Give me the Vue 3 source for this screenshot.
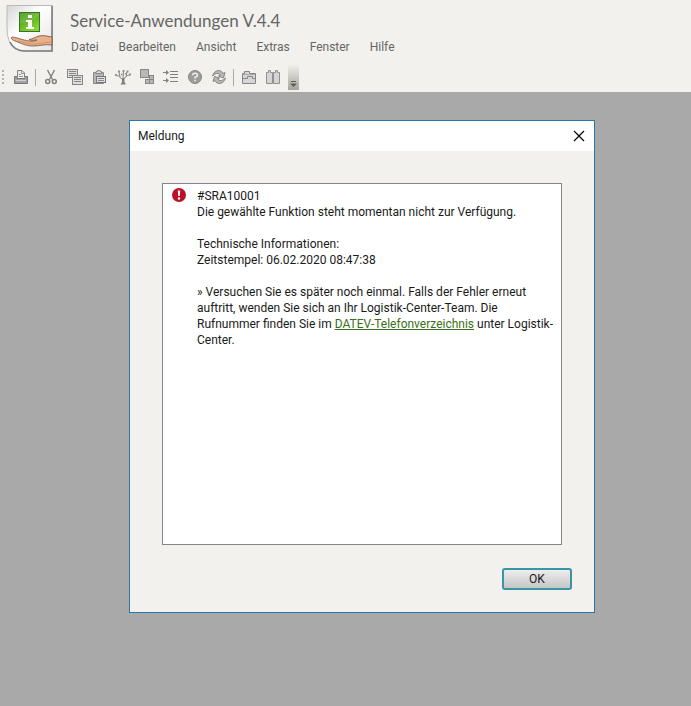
<script setup>
const menus = ['Datei', 'Bearbeiten', 'Ansicht', 'Extras', 'Fenster', 'Hilfe']
</script>

<template>
  <div class="app">
    <header class="header">
      <div class="brand">
        <svg class="logo" viewBox="0 0 48 48" aria-hidden="true">
          <defs>
            <linearGradient id="tile" x1="0" y1="0" x2="1" y2="1">
              <stop offset="0" stop-color="#d4d4d4" />
              <stop offset="0.4" stop-color="#ffffff" />
              <stop offset="1" stop-color="#e4e4e4" />
            </linearGradient>
            <linearGradient id="green" x1="0" y1="0" x2="0.6" y2="1">
              <stop offset="0" stop-color="#3d9412" />
              <stop offset="1" stop-color="#86d436" />
            </linearGradient>
          </defs>
          <path d="M1 .5H46.500V46H19Q6 46 2.500 34Q1 29 1 23Z" fill="url(#tile)" stroke="#b9b9b8" />
          <path d="M46 1V46H19Q8 46 4 37" fill="none" stroke="#7d7d7d" stroke-width="1.600" />
          <rect x="13.500" y="7.500" width="20" height="19" fill="url(#green)" stroke="#36741f" />
          <path d="M14 18Q25 18 33 11V8H14Z" fill="#fff" opacity=".12" />
          <path d="M22 10h4v3h-4zM20 15h6v7h2v2h-8v-2h2v-5h-2z" fill="#fff" />
          <path d="M46 32C40 31 37 30 33 31C29 32 27 34 23 34.500C25 36 29 35 31 35C28 37 22 36 18 35C14 34 9 32 6 32C4 33 6 35 9 36C15 38 19 41 27 41C34 41 38 39 46 40Z" fill="#e8b18b" stroke="#77503c" stroke-width=".8" />
          <path d="M12 36C18 38 23 39 29 39L45 37" fill="none" stroke="#cf946e" stroke-width="1.200" />
        </svg>
        <div class="heading">
          <h1>Service-Anwendungen V.4.4</h1>
          <nav class="menu">
            <a v-for="m in menus" :key="m" href="#" @click.prevent>{{ m }}</a>
          </nav>
        </div>
      </div>

      <div class="toolbar" role="toolbar" aria-label="Symbolleiste">
        <span class="grip"></span>
        <button type="button" aria-label="Drucken">
          <svg viewBox="0 0 16 16">
            <path d="M4.500 8V1.500H9L11.500 4V8" fill="#e9e9e8" stroke="#858585" />
            <path d="M8.500 2V4.500H11M6 5.500h2M6 7.500h4" fill="none" stroke="#999" />
            <path d="M1.500 7.500H4V9.500H12V7.500H14.500V14.500H1.500Z" fill="#a2a2a2" stroke="#787878" />
            <path d="M3 11.500H13" stroke="#d0d0d0" />
          </svg>
        </button>
        <span class="sep"></span>
        <button type="button" aria-label="Ausschneiden">
          <svg viewBox="0 0 16 16" fill="none" stroke="#808080">
            <path d="M4.500 1L9.500 10.500M11.500 1L6.500 10.500" stroke-width="1.400" />
            <circle cx="4.700" cy="12.500" r="2" stroke-width="1.500" />
            <circle cx="11.300" cy="12.500" r="2" stroke-width="1.500" />
          </svg>
        </button>
        <button type="button" aria-label="Kopieren">
          <svg viewBox="0 0 16 16" fill="#dedede" stroke="#858585">
            <rect x=".5" y=".5" width="10" height="8" />
            <path d="M2 2.500h7M2 4.500h7M2 6.500h5" />
            <rect x="5.500" y="6.500" width="10" height="9" />
            <path d="M7 8.500h7M7 10.500h7M7 12.500h7" />
          </svg>
        </button>
        <button type="button" aria-label="Einfügen">
          <svg viewBox="0 0 16 16">
            <path d="M2.500 3.500H12.500V14.500H2.500Z" fill="#b5b5b5" stroke="#888" />
            <path d="M5 4.500V2.500H6.500V1.500H9V2.500H10.500V4.500Z" fill="#ddd" stroke="#888" />
            <rect x="5.500" y="7.500" width="9" height="6" fill="#dedede" stroke="#777" />
            <path d="M7 9.500h6M7 11.500h6" stroke="#888" />
          </svg>
        </button>
        <button type="button" aria-label="Baum">
          <svg viewBox="0 0 16 16">
            <path d="M8 11L3.500 7L1 6.500M5 8L4 3M8 10L8.500 3M8.500 10L12.500 6.500L14.500 6M11 7.500L12 3" fill="none" stroke="#858585" />
            <path d="M7 9H9.500V13L11 15.500H5.500L7 13Z" fill="#808080" />
            <path d="M3 1.500h2v2H3zM7.500 1h2v2h-2zM11.500 1.500h2v2h-2zM14 4.500h2v2h-2zM0 5h2v2H0zM6 4.500h1.500v2H6zM10 4h1.500v1.500H10z" fill="#929292" />
          </svg>
        </button>
        <button type="button" aria-label="Module">
          <svg viewBox="0 0 16 16" fill="#b8b8b8" stroke="#888">
            <rect x="1.500" y=".5" width="8" height="8" />
            <rect x="10.500" y="6.500" width="4" height="4" />
            <rect x="6.500" y="10.500" width="4" height="4" />
            <rect x="10.500" y="10.500" width="4" height="4" />
          </svg>
        </button>
        <button type="button" aria-label="Einzug">
          <svg viewBox="0 0 16 16" fill="none" stroke="#808080">
            <path d="M0 3.500H5M0 11.500H5M7 2.500h8M7 5.500h8M7 8.500h8M7 12.500h8" />
            <path d="M3 1L6 3.500L3 6ZM3 9L6 11.500L3 14Z" fill="#808080" stroke="none" />
          </svg>
        </button>
        <button type="button" aria-label="Hilfe">
          <svg viewBox="0 0 16 16">
            <circle cx="8" cy="8" r="6.500" fill="#9c9c9c" stroke="#858585" />
            <path d="M5.700 6.300Q5.700 4.300 8 4.300Q10.400 4.300 10.400 6.200Q10.400 7.500 8 8.300V9.500M8 10.800V12.300" fill="none" stroke="#eee" stroke-width="1.600" />
          </svg>
        </button>
        <button type="button" aria-label="Aktualisieren">
          <svg viewBox="0 0 16 16" fill="#b8b8b8" stroke="#858585">
            <path d="M1.500 7Q3 1.500 8.500 1.500Q11 2 12 4.500L14 3.500L12.500 9L7.500 7L9.500 6Q8 4 5.500 4.500Q3.500 5 1.500 7Z" />
            <path d="M14.500 9Q13 14.500 7.500 14.500Q5 14 4 11.500L2 12.500L3.500 7.500L8.500 9L6.500 10Q8 12 10.500 11.500Q12.500 11 14.500 9Z" />
          </svg>
        </button>
        <span class="sep"></span>
        <button type="button" aria-label="Werkzeuge">
          <svg viewBox="0 0 16 16" fill="#d5d5d5" stroke="#858585">
            <path d="M1.500 4.500H3.500V2.500H8.500V4.500H14.500V14.500H1.500Z" />
            <path d="M1.500 9.500H6.500V7.500H11.500V9.500H14.500" />
            <path d="M2 5.500H14" stroke="#aaa" />
          </svg>
        </button>
        <button type="button" aria-label="Bereiche">
          <svg viewBox="0 0 16 16" fill="#d5d5d5" stroke="#909090">
            <path d="M1.500 3.500H3.500V1.500H5.500V3.500H7.500V14.500H1.500ZM8.500 3.500H10.500V1.500H12.500V3.500H14.500V14.500H8.500Z" />
          </svg>
        </button>
        <button type="button" class="overflow" aria-label="Weitere Symbole">
          <svg viewBox="0 0 7 6">
            <path d="M1 .5H6" stroke="#5c5c55" />
            <path d="M0 2.500H7L3.500 6Z" fill="#5c5c55" />
          </svg>
        </button>
      </div>
    </header>

    <main class="workspace">
      <section class="dialog" role="dialog" aria-labelledby="dialog-title">
        <div class="titlebar">
          <h2 id="dialog-title">Meldung</h2>
          <button type="button" class="close" aria-label="Schließen">
            <svg viewBox="0 0 12 12"><path d="M1 1L11 11M11 1L1 11" fill="none" stroke="#000" stroke-width="1.200" /></svg>
          </button>
        </div>
        <div class="body">
          <div class="message">
            <svg class="error" viewBox="0 0 14 14" aria-hidden="true">
              <circle cx="7" cy="7" r="7" fill="#bd1029" />
              <path d="M5.800 2.500H8.200L7.800 8H6.200Z" fill="#fff" />
              <circle cx="7" cy="10.500" r="1.200" fill="#fff" />
            </svg>
            <div class="text">
              <p>#SRA10001<br />Die gewählte Funktion steht momentan nicht zur Verfügung.</p>
              <p>Technische Informationen:<br />Zeitstempel: 06.02.2020 08:47:38</p>
              <p>
                » Versuchen Sie es später noch einmal. Falls der Fehler erneut<br />
                auftritt, wenden Sie sich an Ihr Logistik-Center-Team. Die<br />
                Rufnummer finden Sie im <a href="#" @click.prevent>DATEV-Telefonverzeichnis</a> unter Logistik-<br />
                Center.
              </p>
            </div>
          </div>
          <div class="actions">
            <button type="button" class="ok">OK</button>
          </div>
        </div>
      </section>
    </main>
  </div>
</template>

<style>
body {
  margin: 0;
}
</style>

<style scoped>
.app {
  display: flex;
  flex-direction: column;
  min-height: 100vh;
  background: #a9a9a9;
  font-family: Roboto, "Open Sans", sans-serif;
  font-size: 12px;
  line-height: 16px;
  color: #1a1a1a;
}
.header {
  height: 92px;
  background: #f2f1ed;
}
.brand {
  display: flex;
  gap: 16px;
  height: 64px;
  padding-left: 6px;
  box-sizing: border-box;
}
.logo {
  width: 48px;
  height: 48px;
  margin-top: 5px;
}
h1, h2, p {
  margin: 0;
  font-weight: 400;
}
h1 {
  margin-top: 9px;
  font-family: Lato, "Open Sans", sans-serif;
  font-size: 17px;
  line-height: 24px;
  color: #666;
}
.menu {
  display: flex;
  gap: 20px;
  margin-top: 6px;
  padding-left: 1px;
}
.menu a {
  color: #666;
  text-decoration: none;
}
.toolbar {
  display: flex;
  align-items: center;
  height: 26px;
}
button {
  padding: 0;
  border: 0;
  background: none;
  font: inherit;
  color: inherit;
}
.toolbar button {
  display: flex;
  justify-content: center;
  align-items: center;
  width: 24px;
  height: 24px;
}
.toolbar svg {
  width: 16px;
  height: 16px;
}
.grip {
  width: 2px;
  height: 14px;
  margin: 0 5px 0 2px;
  background: repeating-linear-gradient(#b5b5b2 0 2px, transparent 2px 4px);
}
.sep {
  width: 1px;
  height: 17px;
  margin: 0 3px 0 2px;
  background: #aaa;
}
.toolbar .overflow {
  align-items: flex-end;
  width: 11px;
  height: 26px;
  margin-left: 3px;
  padding-bottom: 3px;
  background: linear-gradient(#f2f1ed, #a5a59b);
}
.toolbar .overflow svg {
  width: 7px;
  height: 6px;
}
.workspace {
  display: flex;
  flex: 1;
  padding: 28px 96px 93px 129px;
}
.dialog {
  display: flex;
  flex: 1;
  flex-direction: column;
  border: 1px solid #2a76ac;
  background: #f2f1ed;
}
.titlebar {
  display: flex;
  justify-content: space-between;
  align-items: center;
  height: 30px;
  padding: 0 9px 0 8px;
  background: #fff;
}
h2 {
  font-size: 12px;
}
.close {
  display: flex;
}
.close svg {
  width: 12px;
  height: 12px;
}
.body {
  display: flex;
  flex: 1;
  flex-direction: column;
  gap: 23px;
  padding: 32px 22px 22px 32px;
}
.message {
  display: flex;
  flex: 1;
  gap: 11px;
  margin-right: 10px;
  padding: 4px 4px 4px 9px;
  border: 1px solid #85858a;
  background: #fff;
}
.error {
  flex: none;
  width: 14px;
  height: 14px;
}
.text {
  display: flex;
  flex-direction: column;
  gap: 16px;
  white-space: nowrap;
}
.text a {
  color: #3b7020;
}
.actions {
  display: flex;
  justify-content: flex-end;
}
.ok {
  width: 70px;
  height: 22px;
  border: 2px solid #3a95a5;
  border-radius: 3px;
  background: linear-gradient(#ededed, #c6c6c6);
}
</style>
